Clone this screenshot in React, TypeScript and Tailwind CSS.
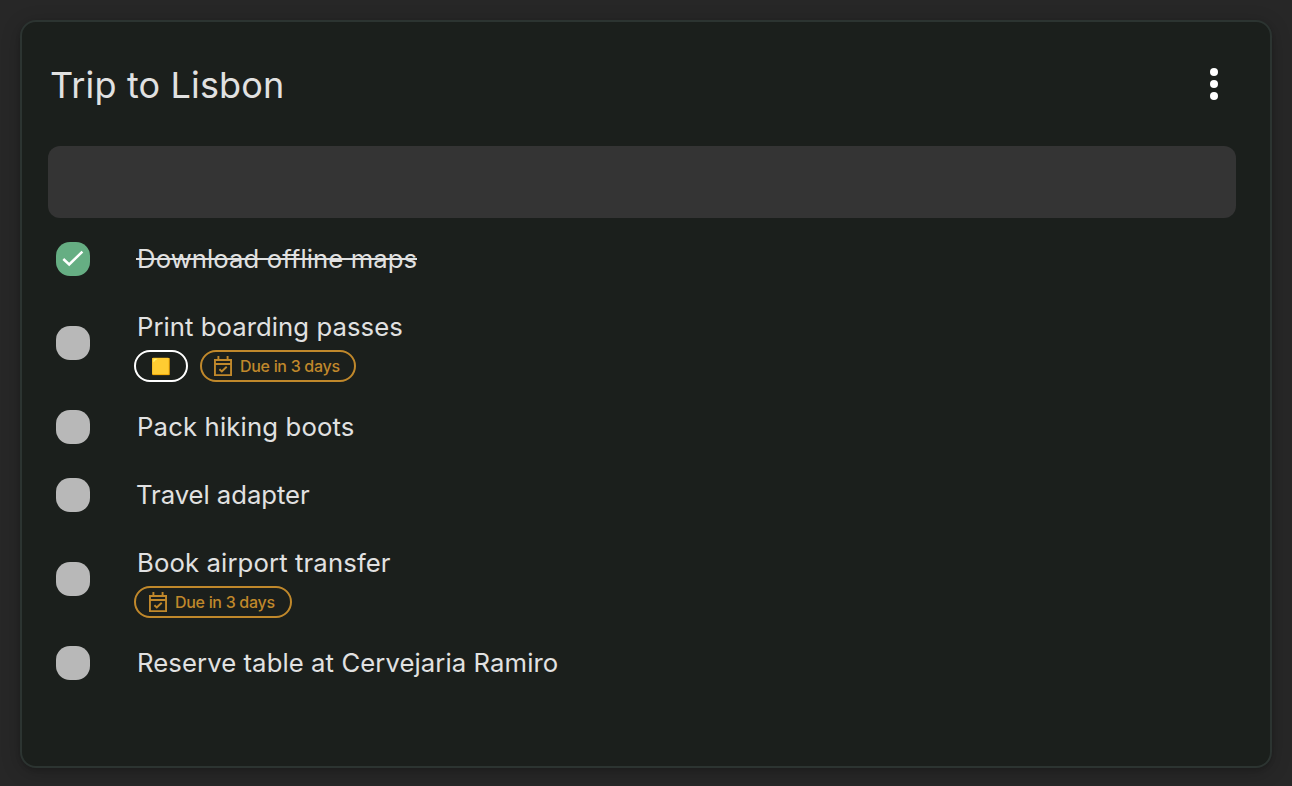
import React from "react";

type Item = {
  title: string;
  spacing: string;
  done?: boolean;
  label?: boolean;
  due?: string;
};

const items: Item[] = [
  { title: "Download offline maps", spacing: "tracking-[0.09px]", done: true },
  { title: "Print boarding passes", spacing: "tracking-[0.05px]", label: true, due: "Due in 3 days" },
  { title: "Pack hiking boots", spacing: "tracking-[0.15px]" },
  { title: "Travel adapter", spacing: "-ml-px tracking-[-0.05px]" },
  { title: "Book airport transfer", spacing: "tracking-[0.12px]", due: "Due in 3 days" },
  { title: "Reserve table at Cervejaria Ramiro", spacing: "tracking-[0.08px]" },
];

function CalendarIcon() {
  return (
    <svg viewBox="0 0 24 24" className="size-6 shrink-0" fill="none" stroke="currentColor" strokeWidth="1.9">
      <path d="M3.95 6h16.1v15.1H3.95zM3.95 10h16.1M7.4 2v4M16.6 2v4" />
      <path d="M8.4 15.2l2.4 2.3 4.9-4.8" />
    </svg>
  );
}

function Checkbox({ done }: { done?: boolean }) {
  return (
    <span
      className={
        done
          ? "flex size-[34px] shrink-0 items-center justify-center rounded-[14px] bg-[#66ae83]"
          : "flex size-[34px] shrink-0 rounded-[14px] bg-[#b8b8b8]"
      }
    >
      {done && (
        <svg viewBox="0 0 34 34" className="size-[34px]" fill="none" stroke="white" strokeWidth="2.5">
          <path d="M7.3 17l5.9 5.5L26.4 9.6" />
        </svg>
      )}
    </span>
  );
}

function Row({ item }: { item: Item }) {
  const chips = item.label || item.due;
  return (
    <li className={chips ? "flex h-[100px] items-center pl-2" : "flex h-[68px] items-center pl-2"}>
      <Checkbox done={item.done} />
      <div className={chips ? "ml-11 flex h-full flex-col pt-4" : "ml-11 flex flex-col"}>
        <span className={`relative pl-[3px] text-[25.7px] leading-9 whitespace-nowrap ${item.spacing}`}>
          {item.title}
          {item.done && <span className="absolute top-[17px] right-0 left-[2px] h-0.5 bg-[#e1e1e1]" />}
        </span>
        {chips && (
          <div className="mt-[5px] flex gap-3">
            {item.label && (
              <span className="flex h-8 w-[54px] items-center justify-center rounded-full border-2 border-white text-[16px] leading-none">
                🟨
              </span>
            )}
            {item.due && (
              <span
                className={`flex h-8 items-center gap-[5px] rounded-full border-2 border-[#c0882b] text-[16px] font-medium tracking-[-0.3px] text-[#c0882b] ${
                  item.label ? "w-[156px] pl-[9px]" : "w-[158px] pl-2.5"
                }`}
              >
                <CalendarIcon />
                <span className="leading-5 whitespace-nowrap">{item.due}</span>
              </span>
            )}
          </div>
        )}
      </div>
    </li>
  );
}

export default function App() {
  return (
    <div className="h-[786px] w-[1292px] bg-[#272727] p-5 font-['Inter','Noto_Color_Emoji',sans-serif] text-[#e1e1e1]">
      <main className="flex h-[748px] flex-col rounded-2xl border-2 border-[#2c3431] bg-[#1b1f1c] pr-[34px] pl-[26px] shadow-[0_2px_4px_rgba(0,0,0,0.15),0_4px_20px_rgba(0,0,0,0.2)]">
        <header className="flex h-[124px] items-center justify-between pr-[18px] pl-[2px]">
          <h1 className="pt-0.5 text-[36px] leading-[48px] tracking-[0.15px]">Trip to Lisbon</h1>
          <button aria-label="Menu" className="flex flex-col gap-1">
            <span className="size-2 rounded-full bg-white" />
            <span className="size-2 rounded-full bg-white" />
            <span className="size-2 rounded-full bg-white" />
          </button>
        </header>
        <input aria-label="Add item" className="h-[72px] w-full shrink-0 rounded-xl bg-[#343434] px-4 text-[26px] outline-none" />
        <ul className="mt-[7px]">
          {items.map((item) => (
            <Row key={item.title} item={item} />
          ))}
        </ul>
      </main>
    </div>
  );
}
